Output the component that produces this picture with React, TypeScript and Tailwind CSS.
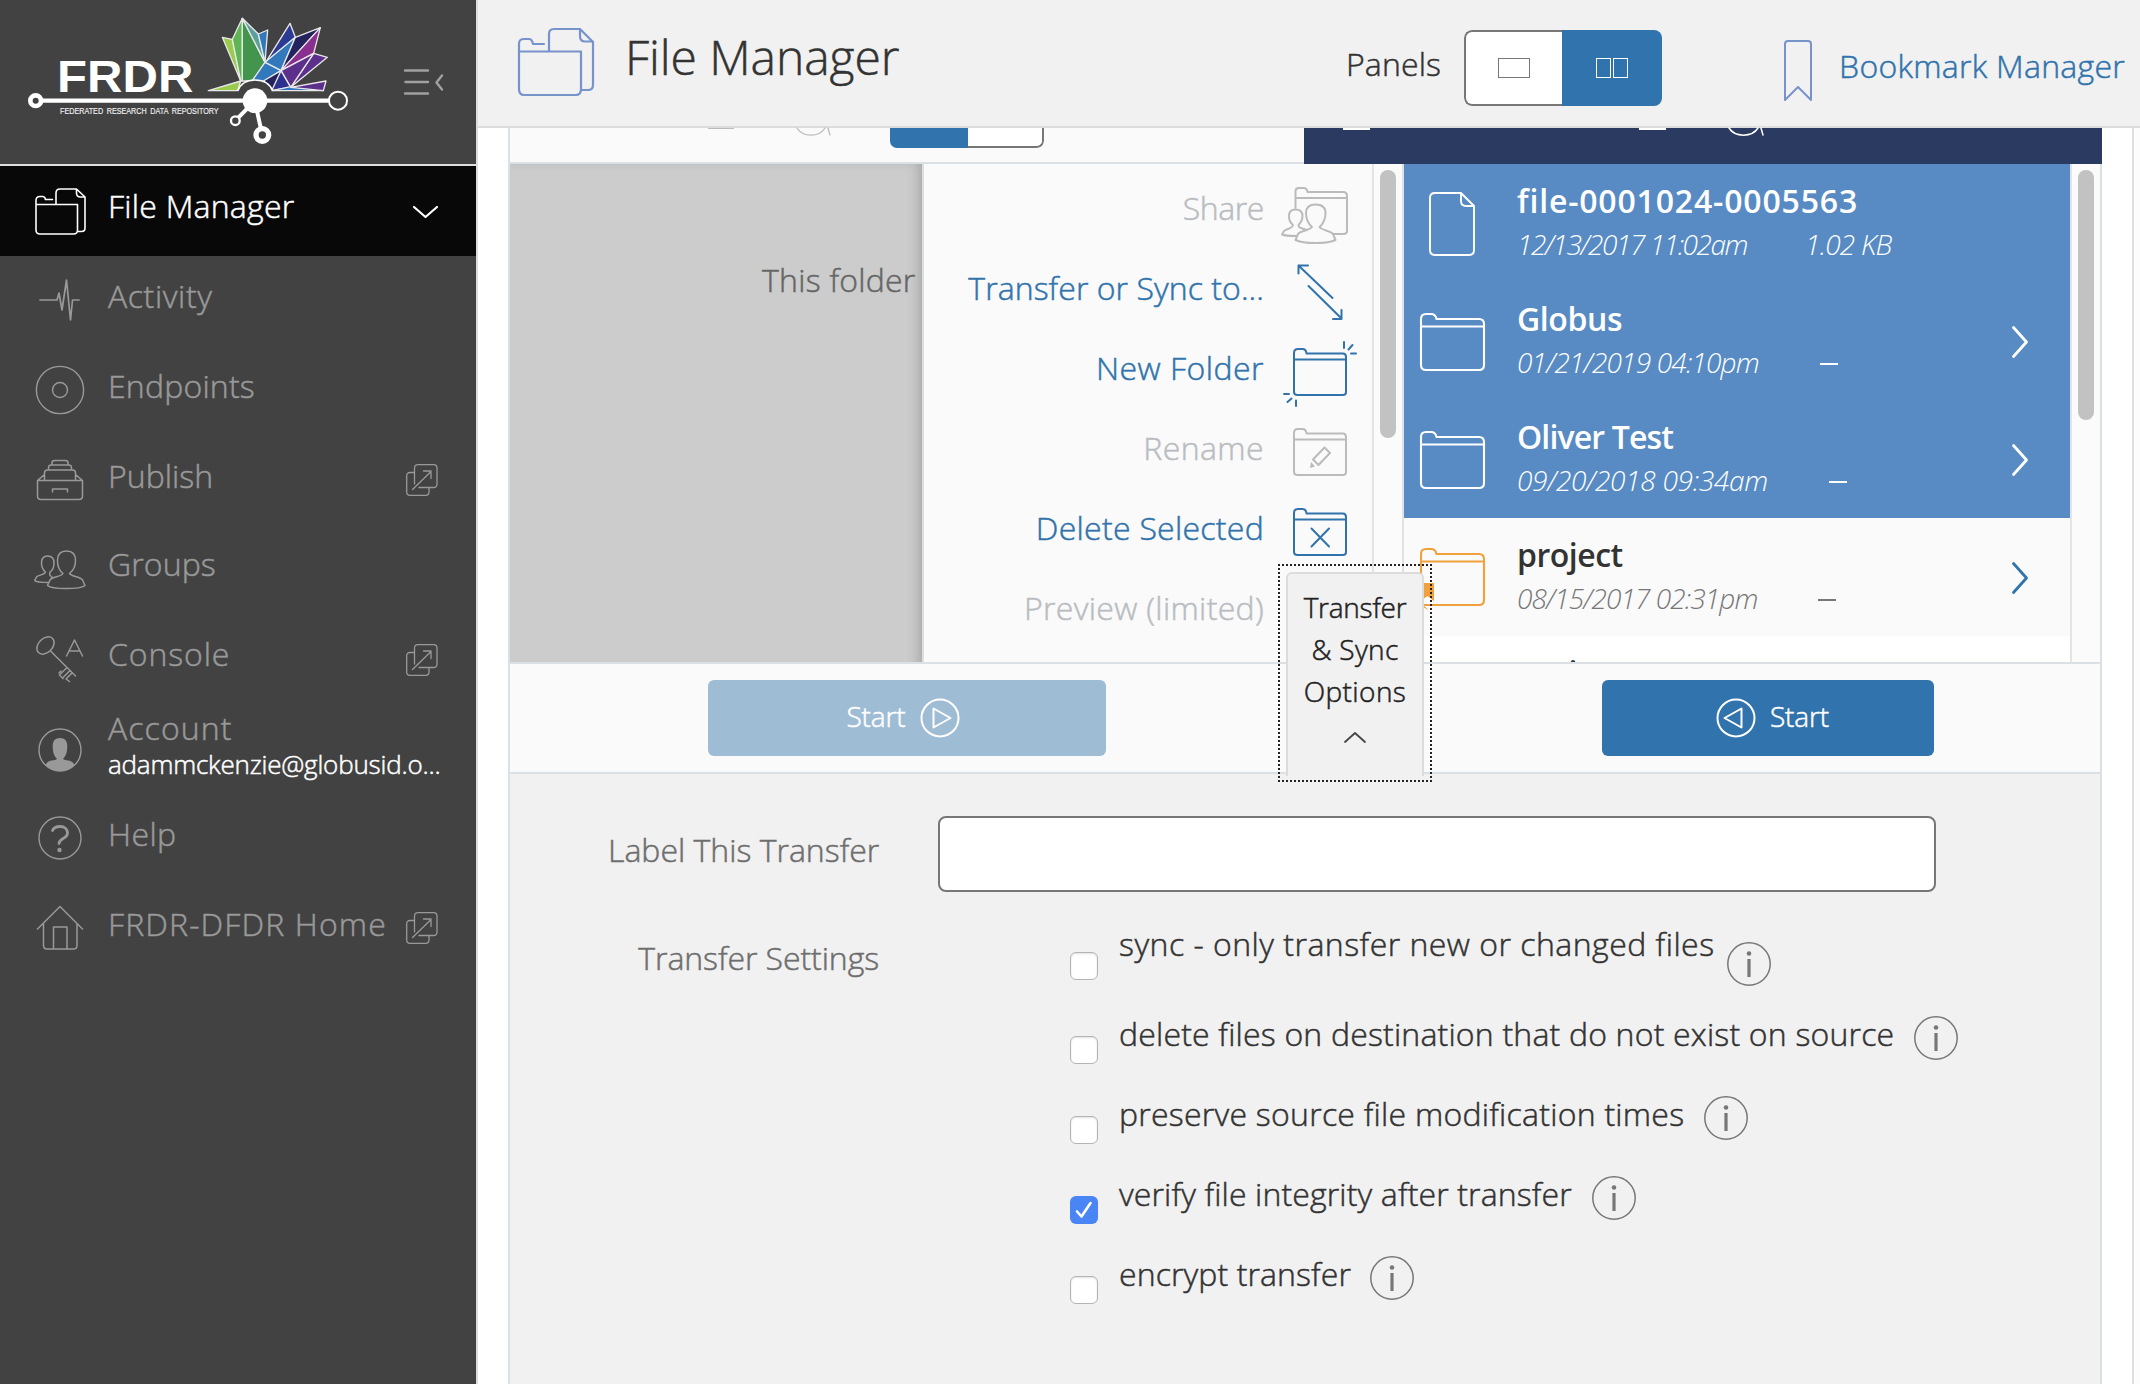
import type { ReactNode } from "react";

function T({ children, c = "" }: { children: string; c?: string }) {
  return <span className={`inline-block whitespace-nowrap ${c}`}>{children}</span>;
}

function Stroke({ w, h, c, sw = 2, children }: { w: number; h: number; c: string; sw?: number; children: ReactNode }) {
  return (
    <svg width={w} height={h} viewBox={`0 0 ${w} ${h}`} fill="none" stroke="currentColor" strokeWidth={sw} strokeLinecap="round" strokeLinejoin="round" className={`block shrink-0 overflow-visible ${c}`}>
      {children}
    </svg>
  );
}

const Logo = () => (
  <svg width="480" height="164" viewBox="0 0 1440 492" className="absolute left-0 top-0">
    <g stroke="#e8e8e8" strokeWidth="4" strokeLinejoin="round">
      <path fill="#9bcb4c" d="M667 112L697 118L722 243Z" />
      <path fill="#5fb455" d="M697 118L727 55V243H722Z" />
      <path fill="#43944d" d="M727 55L795 187L758 243H727Z" />
      <path fill="#5a9f9b" d="M727 55L775 102L795 187Z" />
      <path fill="#3278bd" d="M775 102L803 90L795 187Z" />
      <path fill="#2c3a93" d="M870 70L886 112L797 187Z" />
      <path fill="#3278bd" d="M886 112L843 212L795 187Z" />
      <path fill="#25235e" d="M886 112L961 83L843 212Z" />
      <path fill="#8b2f8f" d="M961 83L941 160L843 212Z" />
      <path fill="#5c2f8c" d="M941 160L982 172L872 262Z" />
      <path fill="#5c2f8c" d="M941 160L872 262L843 212Z" />
      <path fill="#3278bd" d="M795 187L843 212L790 245L756 243Z" />
      <path fill="#25235e" d="M843 212L822 272L790 243Z" />
      <path fill="#2c318f" d="M843 212L872 262L815 272Z" />
      <path fill="#9bcb4c" d="M625 272L722 243L713 272Z" />
      <path fill="#3278bd" d="M815 272L872 260L970 272Z" />
      <path fill="#5c2f8c" d="M872 262L978 243L970 272Z" />
    </g>
    <path d="M713 275C722 250 742 240 765 240C790 240 810 252 818 275Z" fill="#424242" />
    <path d="M713 273C722 250 742 240 765 240C790 240 810 252 818 273" fill="none" stroke="#fff" strokeWidth="5" />
    <g fill="#424242" stroke="#fff">
      <path d="M107 302H1014" strokeWidth="13" />
      <path d="M765 302L706 362M768 320L787 405" strokeWidth="12" />
      <circle cx="107" cy="302" r="16" strokeWidth="14" />
      <circle cx="1014" cy="302" r="27" strokeWidth="6" />
      <circle cx="706" cy="362" r="13" strokeWidth="7" />
      <circle cx="787" cy="405" r="19" strokeWidth="16" />
      <circle cx="765" cy="302" r="37" fill="#fff" stroke="none" />
    </g>
    <text x="171" y="275" textLength="409" lengthAdjust="spacingAndGlyphs" fontSize="132" fontWeight="700" fill="#fff" fontFamily="Liberation Sans, sans-serif">FRDR</text>
    <text x="180" y="342" textLength="476" lengthAdjust="spacingAndGlyphs" fontSize="27" wordSpacing="6" fill="#efefef" stroke="#efefef" strokeWidth="0.5" fontFamily="Liberation Sans, sans-serif">FEDERATED RESEARCH DATA REPOSITORY</text>
  </svg>
);

/* Side navigation icons share a 52px square centred on (26, 26). */
const FilesIcon = () => (
  <Stroke w={52} h={52} c="text-white" sw={1.6}>
    <path d="M2 19V9.500Q2 5.500 6 5.500H8.500Q11 5.500 11.500 8.500H18.500M2 13.500H43.500V39Q43.500 43 39.500 43H6Q2 43 2 39V9.500M22 13V2Q22 -2 26 -2H42.500L51 6V37Q51 40.500 47.500 40.500H44M42.500 -2V2Q42.500 6 46.500 6H51" />
  </Stroke>
);
const ActivityIcon = () => (
  <Stroke w={52} h={52} c="text-[#999]" sw={1.7}><path d="M6 26H23L25 19L28 36L32.500 6L36.500 46L38.500 26H45" /></Stroke>
);
const EndpointIcon = () => (
  <Stroke w={52} h={52} c="text-[#999]" sw={1.4}><circle cx="26" cy="26" r="23.600" /><circle cx="26" cy="26" r="7.500" /></Stroke>
);
const PublishIcon = () => (
  <Stroke w={52} h={52} c="text-[#999]" sw={1.5}>
    <path d="M3.500 26.500H48.500V42Q48.500 45.500 45 45.500H7Q3.500 45.500 3.500 42ZM18.500 38V35H33.500V38M3.500 26.500L10.500 20.500M48.500 26.500L41.500 20.500M10.500 26V19Q10.500 16 13.500 16H38.500Q41.500 16 41.500 19V26M14.500 16V14Q14.500 11 17 11H35Q37.500 11 37.500 14V16M18 11V9Q18 6.500 20.500 6.500H31.500Q34 6.500 34 9V11" />
  </Stroke>
);
const PEOPLE = "M29 29.500C24.500 26 23.500 21 23.500 16.500C23.500 10 27 7 32.500 7C38 7 41.500 10 41.500 16.500C41.500 21 40 26 35.500 29.500C38 33 47 32.500 48.500 36L51 41.500C46 45.500 18 45.500 13.500 41.500L16 36C18 32.500 27 33 29 29.500ZM18.500 33.500C16 31.500 15 31 16 28C19 26 20 23 20 19C20 14 18 12 13.500 12C9.500 12 7.500 14 7.500 19C7.500 23 9 26 11.500 28C10.500 31 4 31 2.500 33L.7 36.500C2 38 10 38.500 15 38.500";
const GroupsIcon = () => <Stroke w={52} h={52} c="text-[#999]" sw={1.5}><path d={PEOPLE} /></Stroke>;
const ConsoleIcon = () => (
  <Stroke w={52} h={52} c="text-[#999]" sw={1.5}>
    <ellipse cx="11.500" cy="12.500" rx="7" ry="10" transform="rotate(45 11.500 12.500)" />
    <path d="M16.500 18L41.500 43M33 34.500L25.500 42L29 45.500M36 37.500L29.500 44M38 40L32 46L35.500 48.500M25 40L27 38M32.500 23L40.500 7L48.500 23M35 18H46" />
  </Stroke>
);
const AccountIcon = () => (
  <Stroke w={52} h={52} c="text-[#999]" sw={1.4}>
    <circle cx="26" cy="26" r="21" />
    <path fill="currentColor" stroke="none" d="M23 35C19.500 31 19 28 18.700 23C18.500 17 21 14 26 14C31 14 33.500 17 33.300 23C33 28 32.500 31 29 35C31 37 38 35 40.500 41C33 49 19 49 11.500 41C14 35 21 37 23 35Z" />
  </Stroke>
);
const HelpIcon = () => (
  <Stroke w={52} h={52} c="text-[#999]" sw={1.4}>
    <circle cx="26" cy="26" r="21" />
    <path strokeWidth="2.800" d="M18.500 18.500C20 15 23 14.500 26 14.500C31 14.500 33.500 17.500 33.500 21C33.500 27 25 26 25 31.500" />
    <circle cx="25.500" cy="38" r="2.200" fill="currentColor" stroke="none" />
  </Stroke>
);
const HomeIcon = () => (
  <Stroke w={52} h={52} c="text-[#999]" sw={1.5}>
    <path d="M3.500 27L26 4.500L48.500 27M9.500 21.500V43.500Q9.500 47 13 47H39.500Q43 47 43 43.500V21.500M19.500 47V25H33V47" />
  </Stroke>
);
const ExternalIcon = () => (
  <Stroke w={32} h={32} c="text-[#999]" sw={1.3}>
    <path d="M8.500 20V4Q8.500 .7 12 .7H27.500Q31 .7 31 4V20Q31 23.500 27.500 23.500H13M8.500 8.500H4Q.7 8.500 .7 12V28Q.7 31.300 4 31.300H19.500Q23 31.300 23 28V23.500M6.500 25.500L25 7.500M17.500 7H25V14.500" />
  </Stroke>
);

type Nav = { label: string; track: string; h: string; im: string; icon: ReactNode; ext?: string };
const nav: Nav[] = [
  { label: "Activity", track: "tracking-[0.6px]", h: "h-[90px]", im: "mt-[18px]", icon: <ActivityIcon /> },
  { label: "Endpoints", track: "tracking-[0.2px]", h: "h-[90px]", im: "mt-[18px]", icon: <EndpointIcon /> },
  { label: "Publish", track: "tracking-[0.05px]", h: "h-[88px]", im: "mt-[18px]", icon: <PublishIcon />, ext: "mt-[28px]" },
  { label: "Groups", track: "tracking-[0.1px]", h: "h-[90px]", im: "mt-[20px]", icon: <GroupsIcon /> },
  { label: "Console", track: "tracking-[0.9px]", h: "h-[90px]", im: "mt-[19px]", icon: <ConsoleIcon />, ext: "mt-[30px]" },
];
const nav2: Nav[] = [
  { label: "Help", track: "tracking-[0.4px]", h: "h-[90px]", im: "mt-[18px]", icon: <HelpIcon /> },
  { label: "FRDR-DFDR Home", track: "tracking-[1.12px]", h: "h-[90px]", im: "mt-[18px]", icon: <HomeIcon />, ext: "mt-[28px]" },
];

function NavRow({ n }: { n: Nav }) {
  return (
    <div className={`flex items-start pl-[34px] pr-[38px] ${n.h}`}>
      <span className={n.im}>{n.icon}</span>
      <T c={`ml-[22px] mt-[20px] text-[32px] leading-[40px] text-[#999] ${n.track}`}>{n.label}</T>
      {n.ext && <span className={`ml-auto ${n.ext}`}><ExternalIcon /></span>}
    </div>
  );
}

function Sidebar() {
  return (
    <aside className="flex w-[478px] shrink-0 flex-col border-r-2 border-[#ddd] bg-[#424242]">
      <div className="relative h-[166px] border-b-2 border-[#ddd]">
        <Logo />
        <span className="absolute left-[404px] top-[68px]">
          <Stroke w={40} h={28} c="text-[#a0a0a0]" sw={2.4}><path d="M1 2.500H24M1.500 14H24M1 25.500H24" /><path d="M38 7.500L32.500 14.500L38 21.500" /></Stroke>
        </span>
      </div>
      <div className="flex h-[90px] items-start bg-[#080808] pl-[34px] pr-[38px]">
        <span className="mt-[25px]"><FilesIcon /></span>
        <T c="ml-[22px] mt-[20px] text-[32px] leading-[40px] text-white tracking-[0.24px]">File Manager</T>
        <span className="ml-auto mt-[40px]"><Stroke w={25} h={12} c="text-white" sw={2.2}><path d="M1 1L12.500 11L24 1" /></Stroke></span>
      </div>
      {nav.map((n) => <NavRow key={n.label} n={n} />)}
      <div className="flex h-[90px] items-start pl-[34px]">
        <span className="mt-[20px]"><AccountIcon /></span>
        <div className="ml-[22px] mt-[4px] flex flex-col">
          <T c="self-start text-[32px] leading-[40px] text-[#999] tracking-[1.1px]">Account</T>
          <T c="mt-[2px] self-start text-[26px] leading-[28px] text-white tracking-[-0.2px]">adammckenzie@globusid.o...</T>
        </div>
      </div>
      {nav2.map((n) => <NavRow key={n.label} n={n} />)}
    </aside>
  );
}

function Header() {
  return (
    <header className="flex h-[128px] shrink-0 items-start border-b-2 border-[#ddd] bg-[#f1f1f1] pl-[40px]">
      <span className="mt-[28px]">
        <Stroke w={76} h={68} c="text-[#7893cc]" sw={2.2}>
          <path d="M1 20V15.500Q1 11 6 11H11Q14 11 15 16H26M1 23.500H63V61Q63 67 58 67H6Q1 67 1 61V15.500M31 23V6Q31 1 36 1H62L75 14V57Q75 62 70 62H63.500M62 1V8Q62 13.500 67 13.500H75" />
        </Stroke>
      </span>
      <T c="ml-[31px] mt-[27px] text-[48px] leading-[60px] text-[#333] tracking-[-0.08px]">File Manager</T>
      <T c="ml-auto mt-[44px] text-[32px] leading-[40px] text-[#333] tracking-[0.12px]">Panels</T>
      <div className="ml-[23px] mt-[30px] flex h-[76px] w-[198px] overflow-hidden rounded-[8px]">
        <div className="flex w-[98px] items-center justify-center rounded-l-[8px] border-2 border-r-0 border-[#777] bg-white"><span className="h-[20px] w-[32px] border border-[#777]" /></div>
        <div className="flex flex-1 items-center justify-center gap-[2px] bg-[#3173ac]">
          <span className="h-[20px] w-[15px] border border-white" /><span className="h-[20px] w-[15px] border border-white" />
        </div>
      </div>
      <span className="ml-[122px] mt-[40px]">
        <Stroke w={28} h={62} c="text-[#7893cc]"><path d="M1 60V4Q1 1 4 1H24Q27 1 27 4V60L14 47Z" /></Stroke>
      </span>
      <T c="ml-[27px] mr-[15px] mt-[46px] text-[32px] leading-[40px] text-[#3173ac] tracking-[0.27px]">Bookmark Manager</T>
    </header>
  );
}

const FOLDER = "M1 11V5Q1 1 5 1H9.500Q13 1 13.500 5.500H50Q53 5.500 53 9V44Q53 47 50 47H4.500Q1 47 1 44V11.500H53";

const ShareIcon = () => (
  <Stroke w={68} h={58} c="text-[#bbb]">
    <path d="M14.500 21V4Q14.500 1 18 1H22.500Q26 1 26.500 5H62Q66 5 66 9V44Q66 47 62.500 47H52M14.500 11H66" />
    <path fill="#fafafa" d="M31 40C26.500 36 25 31 25 26C25 20 29 17.500 34.500 17.500C41 17.500 44.500 20 44.500 26C44.500 31 43 36 38.500 40C41 43.500 50 44 52 47L54.500 53C47 57 22 57 14.500 53L17 47C19 44 28.500 43.500 31 40Z" />
    <path d="M26 43C20 41 17.500 41 17.500 38C20.500 35 21.500 33 21.500 29C21.500 25 19 22.500 14.500 22.500C10 22.500 8 25 8 29C8 33 9.500 36 12 38C11.500 42 4 42 3 44L1 47.500C4 49 10 49 15.500 49" />
  </Stroke>
);
const TransferIcon = () => (
  <Stroke w={46} h={58} c="text-[#3173ac]" sw={2}><path d="M1.500 9.500V1.500H11M1.500 1.500L35.500 34M11.500 22L44.500 54.500M36 55H44.500V46" /></Stroke>
);
const NewFolderIcon = () => (
  <Stroke w={54} h={48} c="text-[#3173ac]"><path d={FOLDER} /><path d="M51 0V-6M55.500 1.500L59.500 -3M58 5.500H63M-9 46H-4M-5.500 54L-1.500 50.500M3 52.500V58" /></Stroke>
);
const RenameIcon = () => (
  <Stroke w={54} h={48} c="text-[#bbb]"><path d={FOLDER} /><path d="M20 31.500L31.500 19.500L37 25L25.500 37Z" /><path fill="currentColor" stroke="none" d="M18 34L22 38.500L17 40Z" /></Stroke>
);
const DeleteIcon = () => (
  <Stroke w={54} h={48} c="text-[#3173ac]"><path d={FOLDER} /><path d="M18.500 20.500L36 38.500M36 20.500L18.500 38.500" /></Stroke>
);

const actions: { label: string; track: string; on?: boolean; im?: string; icon?: ReactNode }[] = [
  { label: "Share", track: "tracking-[-0.4px]", im: "-mr-[2px] mt-[17px]", icon: <ShareIcon /> },
  { label: "Transfer or Sync to...", track: "tracking-[0.06px]", on: true, im: "mr-[4px] mt-[14px]", icon: <TransferIcon /> },
  { label: "New Folder", track: "tracking-[0.48px]", on: true, im: "mt-[18px]", icon: <NewFolderIcon /> },
  { label: "Rename", track: "tracking-[0.4px]", im: "mt-[18px]", icon: <RenameIcon /> },
  { label: "Delete Selected", track: "tracking-[0.28px]", on: true, im: "mt-[18px]", icon: <DeleteIcon /> },
  { label: "Preview (limited)", track: "tracking-[0.33px]" },
];

const Scrollbar = ({ h, c }: { h: string; c: string }) => (
  <div className={`shrink-0 border-l-2 border-[#e4e4e4] bg-[#fbfbfb] pl-[6px] pt-[6px] ${c}`}><div className={`w-[16px] rounded-full bg-[#c2c2c2] ${h}`} /></div>
);

type Kind = "file" | "folder" | "shared";
function FileGlyph({ kind }: { kind: Kind }) {
  if (kind === "file")
    return <span className="ml-[25px] mt-[28px]"><Stroke w={46} h={64} c="text-white" sw={1.9}><path d="M32 1H6Q1 1 1 6V58Q1 63 6 63H40Q45 63 45 58V14ZM32 1V9Q32 14 37 14H45" /></Stroke></span>;
  return (
    <span className={`ml-[16px] ${kind === "shared" ? "mt-[30px] text-[#f0a03c]" : "mt-[31px] text-white"}`}>
      <Stroke w={65} h={58} c="" sw={2.1}>
        <path d="M1 12V6Q1 1 6 1H11Q15.500 1 16.500 6H59Q64 6 64 11V52Q64 57 59 57H6Q1 57 1 52V13.500H64" />
        {kind === "shared" && <path fill="currentColor" stroke="none" d="M-10 35H14V53L10 50Q7 46 4 52V58L9 62L0 58Z" />}
        {kind === "shared" && <path fill="#fff" stroke="none" d="M3 52Q7 46 10 50L13 56H4Z" />}
      </Stroke>
    </span>
  );
}

type Item = { name: string; track: string; date?: string; dt?: string; size?: string; kind: Kind };
const files: Item[] = [
  { name: "file-0001024-0005563", track: "tracking-[0.82px]", date: "12/13/2017 11:02am", dt: "tracking-[-1.45px]", size: "1.02 KB", kind: "file" },
  { name: "Globus", track: "tracking-[-0.4px]", date: "01/21/2019 04:10pm", dt: "tracking-[-0.82px]", kind: "folder" },
  { name: "Oliver Test", track: "tracking-[-0.85px]", date: "09/20/2018 09:34am", dt: "tracking-[-0.3px]", kind: "folder" },
  { name: "project", track: "tracking-[-0.5px]", date: "08/15/2017 02:31pm", dt: "tracking-[-0.9px]", kind: "shared" },
  { name: "projects", track: "tracking-[-0.6px]", kind: "shared" },
];

function FileRow({ f, i }: { f: Item; i: number }) {
  const sel = i < 3;
  return (
    <div className={`flex h-[118px] shrink-0 items-start ${sel ? "bg-[#588bc4] text-white" : i === 3 ? "bg-[#fafafa] text-[#333]" : "bg-white text-[#333]"}`}>
      <span className="flex w-[113px] shrink-0 items-start"><FileGlyph kind={f.kind} /></span>
      <div className="flex flex-col pt-[15px]">
        <T c={`self-start text-[32px] font-semibold leading-[44px] [-webkit-text-stroke:0] ${f.track}`}>{f.name}</T>
        {f.date && (
          <div className={`mt-px flex text-[28px] font-light italic leading-[40px] [-webkit-text-stroke:0] ${sel ? "" : "text-[#777]"}`}>
            <T c={f.dt}>{f.date}</T>
            {f.size ? <T c="ml-[58px] tracking-[-0.8px]">{f.size}</T> : <span className={`ml-[61px] mt-[21px] h-[2px] w-[18px] ${sel ? "bg-white" : "bg-[#777]"}`} />}
          </div>
        )}
      </div>
      {f.kind !== "file" && (
        <span className="ml-auto mr-[42px] mt-[44px]"><Stroke w={16} h={32} c={sel ? "text-white" : "text-[#3173ac]"} sw={2.8}><path d="M1.500 1.500L14.500 16L1.500 30.500" /></Stroke></span>
      )}
    </div>
  );
}

function Toolbar() {
  return (
    <div className="flex h-[36px] shrink-0">
      <div className="flex w-[794px] items-start border-b-2 border-[#dbe0e4] bg-[#fafafa]">
        <span className="ml-[198px] h-[1px] w-[26px] bg-[#bbb]" />
        <span className="ml-[62px]"><Stroke w={40} h={10} c="text-[#bbb]" sw={1.3}><path d="M1 0C7 9.500 23 9.500 29 0M32 0L34 7" /></Stroke></span>
        <div className="ml-[54px] flex h-[20px] w-[154px] overflow-hidden rounded-b-[7px]">
          <div className="w-[78px] bg-[#3173ac]" />
          <div className="flex-1 rounded-br-[7px] border-b-2 border-r-2 border-[#777] bg-white" />
        </div>
      </div>
      <div className="relative -mr-[2px] flex flex-1 items-start bg-[#2b3a60]">
        <span className="ml-[39px] h-[2px] w-[27px] bg-white" />
        <span className="ml-[269px] h-[2px] w-[27px] bg-white" />
        <span className="ml-[62px]"><Stroke w={40} h={10} c="text-white" sw={1.5}><path d="M1 0C7 9.500 24 9.500 30 0M33 0L35 7" /></Stroke></span>
      </div>
    </div>
  );
}

function Panels() {
  return (
    <div className="flex h-[498px] shrink-0 overflow-hidden">
      <div className="w-[414px] shrink-0 overflow-hidden border-r-2 border-[#dbdfe2] bg-[#ccc] shadow-[inset_-12px_4px_14px_-10px_rgba(0,0,0,0.22)]">
        <T c="ml-[252px] mt-[96px] text-[32px] leading-[40px] text-[#666] tracking-[0.25px]">This folder</T>
      </div>
      <div className="flex w-[448px] shrink-0 flex-col bg-[#fafafa] pt-[6px]">
        {actions.map((a) => (
          <div key={a.label} className="flex h-[80px] shrink-0 items-start">
            <T c={`ml-auto mt-[18px] text-[32px] leading-[40px] ${a.track} ${a.on ? "text-[#3173ac]" : "text-[#b9bdc1]"}`}>{a.label}</T>
            <span className="flex w-[108px] shrink-0 items-start justify-end pr-[25px]">{a.icon && <span className={a.im}>{a.icon}</span>}</span>
          </div>
        ))}
      </div>
      <Scrollbar h="h-[268px]" c="w-[30px]" />
      <div className="w-[2px] shrink-0 bg-[#dfe3e6]" />
      <div className="flex w-[666px] shrink-0 flex-col">
        {files.map((f, i) => <FileRow key={f.name} f={f} i={i} />)}
      </div>
      <Scrollbar h="h-[250px]" c="flex-1" />
    </div>
  );
}

function StartBar() {
  return (
    <div className="relative flex h-[112px] shrink-0 border-y-2 border-[#dbe0e4] bg-[#fafafa] pt-[16px]">
      <button className="ml-[198px] flex h-[76px] w-[398px] items-center justify-center gap-[15px] rounded-[6px] bg-[#9fbcd5] pr-[7px] text-white">
        <T c="-mt-[4px] text-[28px] leading-[36px] tracking-[-0.15px]">Start</T>
        <Stroke w={40} h={40} c=""><circle cx="20" cy="20" r="18.500" /><path d="M13.500 10.500V29.500L30.500 20Z" /></Stroke>
      </button>
      <button className="ml-[496px] flex h-[76px] w-[332px] items-center justify-center gap-[14px] rounded-[6px] bg-[#3173ac] pl-[9px] text-white">
        <Stroke w={40} h={40} c=""><circle cx="20" cy="20" r="18.500" /><path d="M25.500 10.500V29.500L8.500 20Z" /></Stroke>
        <T c="-mt-[4px] text-[28px] leading-[36px] tracking-[-0.15px]">Start</T>
      </button>
      <div className="absolute left-[768px] top-[-100px] h-[218px] w-[154px] border-2 border-dotted border-[#222] p-[6px]">
        <div className="flex h-[204px] flex-col items-center rounded-t-[6px] border-2 border-b-0 border-[#dcdcdc] bg-[#f1f1f1] pt-[12px] text-[28px] leading-[42px] text-[#222]">
          <T c="tracking-[-0.25px]">Transfer</T>
          <T c="tracking-[0.3px]">& Sync</T>
          <T c="tracking-[0.4px]">Options</T>
          <span className="mt-[20px]"><Stroke w={22} h={11} c="text-[#444]" sw={1.8}><path d="M1 10L11 1L21 10" /></Stroke></span>
        </div>
      </div>
    </div>
  );
}

const InfoIcon = () => (
  <Stroke w={44} h={44} c="text-[#777]" sw={1.5}>
    <circle cx="22" cy="22" r="21.200" />
    <path d="M22 17V35" strokeWidth="3.200" strokeLinecap="butt" />
    <circle cx="22" cy="11.500" r="2.300" fill="currentColor" stroke="none" />
  </Stroke>
);

const settings = [
  { label: "sync - only transfer new or changed files", track: "tracking-[0.48px]", h: "h-[90px]", box: "mt-[27px]", info: "ml-[12px] mt-[17px]" },
  { label: "delete files on destination that do not exist on source", track: "tracking-[0.19px]", h: "h-[80px]", box: "mt-[21px]", info: "ml-[20px] mt-[1px]" },
  { label: "preserve source file modification times", track: "tracking-[0.25px]", h: "h-[80px]", box: "mt-[21px]", info: "ml-[20px] mt-[1px]" },
  { label: "verify file integrity after transfer", track: "tracking-[0.13px]", h: "h-[80px]", box: "mt-[21px]", info: "ml-[20px] mt-[1px]", on: true },
  { label: "encrypt transfer", track: "tracking-[0.1px]", h: "h-[80px]", box: "mt-[21px]", info: "ml-[19px] mt-[1px]" },
];

function Form() {
  return (
    <div className="flex-1 bg-[#f1f1f1] pt-[42px]">
      <div className="flex h-[109px] items-start">
        <T c="ml-[98px] mt-[14px] text-[32px] leading-[40px] text-[#6e6e6e]">Label This Transfer</T>
        <div className="ml-auto mr-[164px] h-[76px] w-[998px] rounded-[8px] border-2 border-[#777] bg-white" />
      </div>
      <div className="flex items-start">
        <div className="flex w-[369px] justify-end"><T c="mt-[13px] text-[32px] leading-[40px] text-[#6e6e6e] tracking-[-0.08px]">Transfer Settings</T></div>
        <div className="ml-[191px]">
          {settings.map((s) => (
            <div key={s.label} className={`flex items-start ${s.h}`}>
              {s.on ? (
                <span className={`flex h-[28px] w-[28px] items-center justify-center rounded-[6px] bg-[#4a85f5] ${s.box}`}><Stroke w={18} h={18} c="text-white" sw={2.6}><path d="M2 10.500L6.500 15.500L15.500 2" /></Stroke></span>
              ) : (
                <span className={`h-[28px] w-[28px] rounded-[6px] border border-[#b4b4b4] bg-white shadow-[inset_0_1px_2px_rgba(0,0,0,0.12)] ${s.box}`} />
              )}
              <T c={`-mt-px ml-[21px] text-[32px] leading-[40px] text-[#333] ${s.track}`}>{s.label}</T>
              <span className={s.info}><InfoIcon /></span>
            </div>
          ))}
        </div>
      </div>
    </div>
  );
}

export default function App() {
  return (
    <div className="flex h-[1384px] w-[2140px] overflow-hidden bg-white font-['Open_Sans',sans-serif] font-light [-webkit-text-stroke:0.5px]">
      <Sidebar />
      <div className="flex min-w-0 flex-1 flex-col">
        <Header />
        <div className="flex min-h-0 flex-1">
          <div className="ml-[30px] flex w-[1594px] shrink-0 flex-col border-x-2 border-[#dbe0e4]">
            <Toolbar />
            <Panels />
            <StartBar />
            <Form />
          </div>
          <div className="ml-[30px] flex-1 border-l-2 border-[#dedede] bg-[#fcfcfc]" />
        </div>
      </div>
    </div>
  );
}
